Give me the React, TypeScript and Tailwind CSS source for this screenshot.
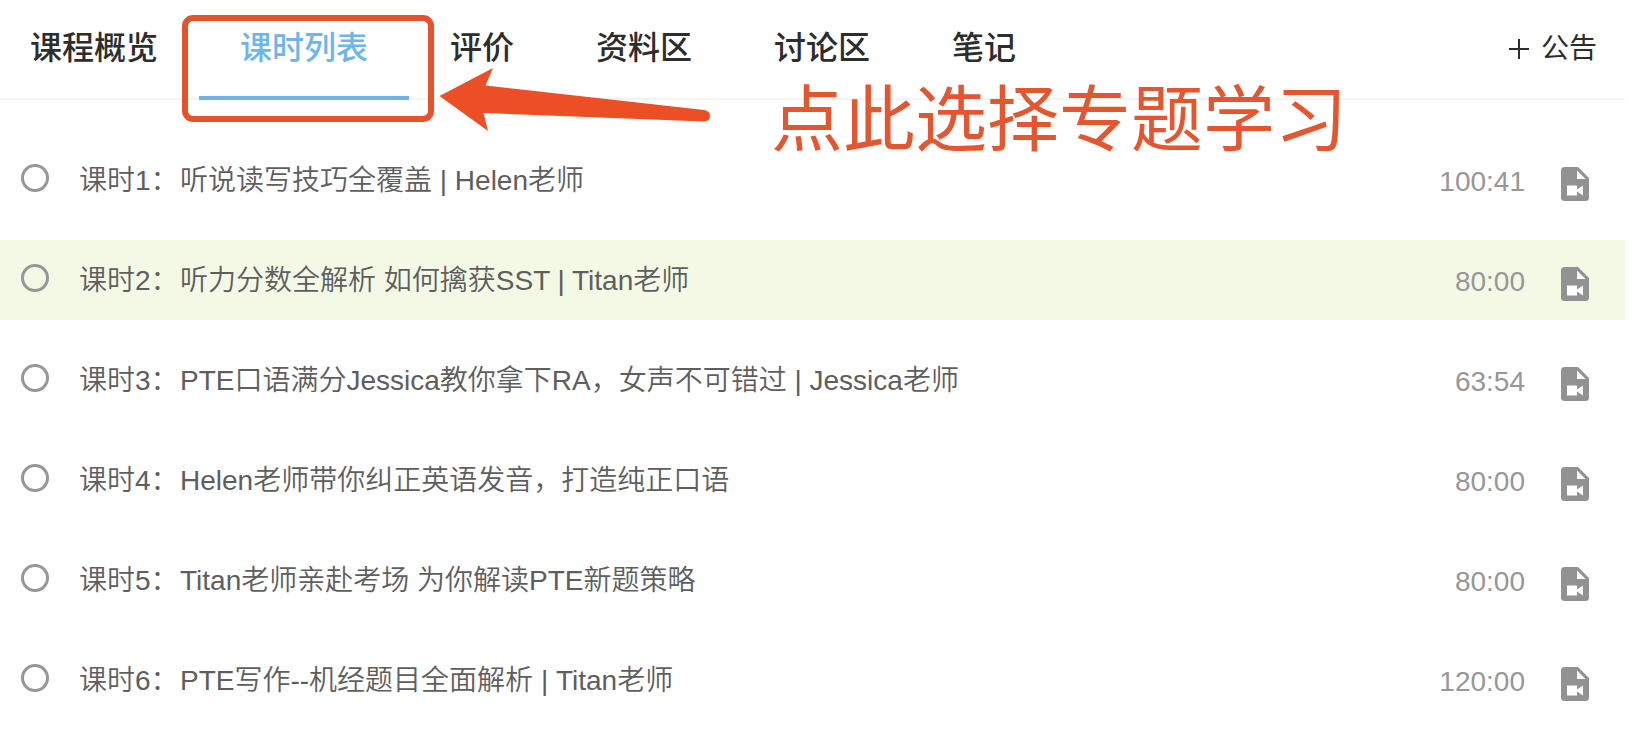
import { useState } from 'react'
import clsx from 'clsx'

interface Lesson {
  id:       number
  title:    string
  duration: string
}

const TABS = ['课程概览', '课时列表', '评价', '资料区', '讨论区', '笔记']

const LESSONS: Lesson[] = [
  { id: 1, title: '听说读写技巧全覆盖 | Helen老师', duration: '100:41' },
  { id: 2, title: '听力分数全解析 如何擒获SST | Titan老师', duration: '80:00' },
  { id: 3, title: 'PTE口语满分Jessica教你拿下RA，女声不可错过 | Jessica老师', duration: '63:54' },
  { id: 4, title: 'Helen老师带你纠正英语发音，打造纯正口语', duration: '80:00' },
  { id: 5, title: 'Titan老师亲赴考场 为你解读PTE新题策略', duration: '80:00' },
  { id: 6, title: 'PTE写作--机经题目全面解析 | Titan老师', duration: '120:00' },
]

function VideoFileIcon() {
  return (
    <svg width="28" height="34" viewBox="0 0 28 34" fill="none" aria-hidden="true">
      <path d="M3.5 0H17L28 11V30.5Q28 34 24.5 34H3.5Q0 34 0 30.5V3.5Q0 0 3.5 0Z" fill="#929292" />
      <path d="M16 3.5V12H24.5Z" fill="#fff" />
      <path d="M6 18.5H16V22.5L22 18.5V28.5L16 24.5V28.5H6Z" fill="#fff" />
    </svg>
  )
}

function LessonRow({ lesson, active }: { lesson: Lesson; active: boolean }) {
  const inputId = `lesson-${lesson.id}`

  return (
    <li className={clsx('flex h-20 items-center pl-[21px] pr-9', active && 'bg-[#f4f9e6]')}>
      <input
        id={inputId}
        type="radio"
        name="lesson"
        className="mb-1 h-7 w-7 shrink-0 appearance-none rounded-full border-[3px] border-[#979797]"
      />
      <label htmlFor={inputId} className="ml-[30px] flex flex-1 pt-[2px] text-[28px] font-[350] leading-10 text-[#5e5e5e]">
        <span className="w-[101px] shrink-0">课时{lesson.id}：</span>
        <span>{lesson.title}</span>
      </label>
      <span className="pt-1 text-[28px] leading-10 text-[#979797]">{lesson.duration}</span>
      <span className="ml-9 pt-2">
        <VideoFileIcon />
      </span>
    </li>
  )
}

// Hand-drawn style pointer that sits over the tab bar
function Callout() {
  return (
    <div className="pointer-events-none absolute inset-0">
      <div className="absolute left-[182px] top-[15px] h-[107px] w-[252px] rounded-[11px] border-[6px] border-[#e4532c]" />
      <svg className="absolute left-[439px] top-[68px]" width="272" height="64" viewBox="0 0 272 64" fill="none">
        <path
          d="M0.5 28L54 0L46.5 17.5L265 42Q271 43 271 48Q271 53 265 53.5L44.5 45L49 63Z"
          fill="#ec4f26"
        />
      </svg>
      <p className="absolute left-[771px] top-20 whitespace-nowrap text-[72px] leading-20 text-[#e4562f]">
        点此选择专题学习
      </p>
    </div>
  )
}

export default function App() {
  const [tab, setTab] = useState('课时列表')

  return (
    <main className="relative min-h-screen bg-white pr-[15px] font-['Liberation_Sans','Noto_Sans_CJK_SC',sans-serif]">
      <header className="flex h-[100px] items-stretch justify-between border-b-2 border-[#f3f3f3] pr-7">
        <nav className="flex">
          {TABS.map((name) => (
            <button
              key={name}
              type="button"
              onClick={() => setTab(name)}
              className={clsx(
                '-mb-[2px] px-[41px] first:pl-[30px] text-[32px] font-medium leading-10',
                'border-b-4',
                name === tab ? 'border-[#6db3e6] text-[#6db5ea]' : 'border-transparent text-[#2d2d2d]',
              )}
            >
              {name}
            </button>
          ))}
        </nav>

        <button type="button" className="flex items-center gap-3 text-[28px] leading-10 text-[#2d2d2d]">
          <svg width="20" height="20" viewBox="0 0 20 20" fill="none" aria-hidden="true">
            <path d="M10 0V20M0 10H20" stroke="#2d2d2d" strokeWidth="2" />
          </svg>
          公告
        </button>
      </header>

      <ul className="mt-10 flex flex-col gap-5">
        {LESSONS.map((lesson) => (
          <LessonRow key={lesson.id} lesson={lesson} active={lesson.id === 2} />
        ))}
      </ul>

      <Callout />
    </main>
  )
}
